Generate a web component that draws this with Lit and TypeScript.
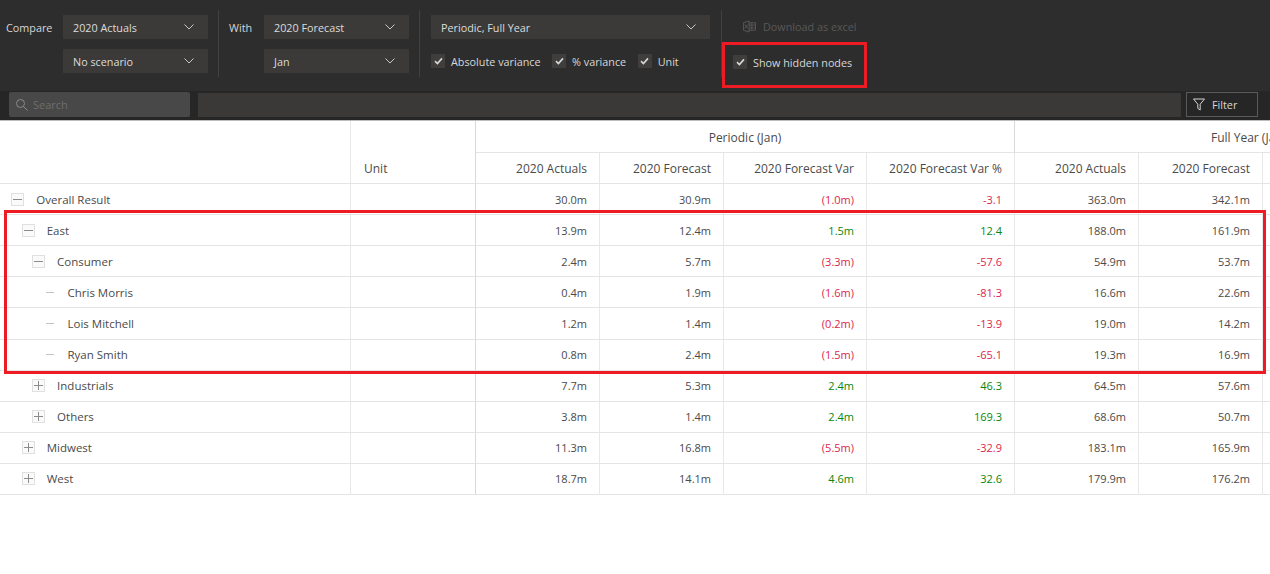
import { LitElement, html, css, svg } from 'lit';
import { customElement } from 'lit/decorators.js';

type Row = { label: string; level: number; kind: 'minus' | 'plus' | 'leaf'; vals: string[] };

const rows: Row[] = [
    { label: 'Overall Result', level: 0, kind: 'minus', vals: ['30.0m', '30.9m', '(1.0m)', '-3.1', '363.0m', '342.1m'] },
    { label: 'East', level: 1, kind: 'minus', vals: ['13.9m', '12.4m', '1.5m', '12.4', '188.0m', '161.9m'] },
    { label: 'Consumer', level: 2, kind: 'minus', vals: ['2.4m', '5.7m', '(3.3m)', '-57.6', '54.9m', '53.7m'] },
    { label: 'Chris Morris', level: 3, kind: 'leaf', vals: ['0.4m', '1.9m', '(1.6m)', '-81.3', '16.6m', '22.6m'] },
    { label: 'Lois Mitchell', level: 3, kind: 'leaf', vals: ['1.2m', '1.4m', '(0.2m)', '-13.9', '19.0m', '14.2m'] },
    { label: 'Ryan Smith', level: 3, kind: 'leaf', vals: ['0.8m', '2.4m', '(1.5m)', '-65.1', '19.3m', '16.9m'] },
    { label: 'Industrials', level: 2, kind: 'plus', vals: ['7.7m', '5.3m', '2.4m', '46.3', '64.5m', '57.6m'] },
    { label: 'Others', level: 2, kind: 'plus', vals: ['3.8m', '1.4m', '2.4m', '169.3', '68.6m', '50.7m'] },
    { label: 'Midwest', level: 1, kind: 'plus', vals: ['11.3m', '16.8m', '(5.5m)', '-32.9', '183.1m', '165.9m'] },
    { label: 'West', level: 1, kind: 'plus', vals: ['18.7m', '14.1m', '4.6m', '32.6', '179.9m', '176.2m'] },
];

const chevron = svg`<svg class="chev" width="10" height="6" viewBox="0 0 10 6"><path d="M.5.5L5 5 9.5.5" fill="none" stroke="#c8c8c8" stroke-width="1"/></svg>`;

@customElement('app-root')
export class AppRoot extends LitElement {
    static styles = css`
    :host {
        display: block;
        position: relative;
        width: 1270px;
        height: 574px;
        overflow: hidden;
        background: #fff;
        font-family: "Open Sans", "Noto Sans", sans-serif;
        font-size: 11px;
        color: #4a4a4a;
    }
    .toolbar {
        height: 91px;
        box-sizing: border-box;
        background: #2d2d2d;
        display: flex;
        padding-top: 10px;
        color: #d6d6d6;
        font-size: 10.8px;
    }
    .group {
        display: grid;
        grid-template-rows: 24px 24px;
        row-gap: 10px;
        padding-top: 5px;
        align-items: center;
        height: 67px;
        box-sizing: border-box;
        border-right: 1px solid #414141;
    }
    .g1 { width: 219px; grid-template-columns: 57px 145px; padding-left: 6px; }
    .g2 { width: 201px; grid-template-columns: 35px 145px; padding-left: 10px; }
    .g3 { width: 302px; grid-template-columns: 279px; padding-left: 11px; }
    .g4 { display: block; padding: 0; border: 0; }
    .select {
        grid-column: 2;
        height: 24px;
        background: #3b3a38;
        display: flex;
        align-items: center;
        justify-content: space-between;
        padding: 0 14px 0 10px;
        box-sizing: border-box;
        color: #dcdcdc;
    }
    .g3 .select { grid-column: 1; }
    .checks { display: flex; gap: 11.5px; }
    .check { display: flex; align-items: center; gap: 6px; color: #d8d8d8; }
    .box {
        width: 14px;
        height: 14px;
        background: #3f3e3c;
        display: flex;
        align-items: center;
        justify-content: center;
    }
    .download {
        display: flex;
        align-items: center;
        gap: 7px;
        height: 24px;
        margin: 4px 0 0 21px;
        color: #595959;
    }
    .hidden-nodes { display: flex; align-items: center; margin: 12px 0 0 11px; height: 24px; }
    .searchbar {
        height: 29px;
        box-sizing: border-box;
        background: #262626;
        display: flex;
        align-items: flex-start;
        padding: 1px 12px 0 9px;
        gap: 5px;
    }
    .search {
        width: 181px;
        height: 25px;
        margin-right: 3px;
        background: #484848;
        border-radius: 2px;
        display: flex;
        align-items: center;
        gap: 5px;
        padding-left: 6px;
        box-sizing: border-box;
        color: #6e6e6e;
        font-size: 11px;
    }
    .crumbs { flex: 1; height: 24px; background: #3a3937; margin-top: 1px; }
    .filter {
        width: 72px;
        height: 25px;
        box-sizing: border-box;
        border: 1px solid #5a5a5a;
        display: flex;
        align-items: center;
        gap: 7px;
        padding-left: 6px;
        color: #d6d6d6;
        font-size: 10.8px;
    }
    .table {
        border-top: 1px solid #bdbdbd;
        display: grid;
        grid-template-columns: 351px 125px 124px 124px 143px 148px 124px 124px 100px;
        grid-auto-rows: 31.05px;
        grid-template-rows: 31.65px 31.65px;
        width: 1363px;
    }
    .cell {
        box-sizing: border-box;
        display: flex;
        align-items: center;
        justify-content: flex-end;
        padding-right: 12px;
        border-right: 1px solid #e8e8e8;
        border-bottom: 1px solid #e4e4e4;
    }
    .hcell { font-size: 12px; color: #4a4a4a; padding-top: 1px; }
    .span { grid-column: span 4; justify-content: center; padding: 3px 0 0; }
    .span2 { grid-column: span 3; justify-content: flex-start; padding: 3px 0 0 196px; white-space: nowrap; }
    .unit { justify-content: flex-start; padding-left: 13px; }
    .noline { border-bottom: 0; }
    .label { justify-content: flex-start; padding-right: 0; font-size: 11.5px; }
    .strong { border-right-color: #d9d9d9; }
    .neg { color: #dc1f4f; }
    .pos { color: #0a860a; }
    .tree {
        width: 13px;
        height: 13px;
        margin-right: 12px;
        flex: none;
        display: block;
    }
    .mark {
        position: absolute;
        border: 3px solid #ed1c24;
        box-sizing: border-box;
        pointer-events: none;
    }
    .mark-a { left: 722px; top: 42px; width: 145px; height: 46px; }
    .mark-b { left: 4px; top: 210px; width: 1262px; height: 164px; }
    `;

    private treeIcon(kind: Row['kind']) {
        if (kind === 'leaf') {
            return svg`<svg class="tree" viewBox="0 0 13 13"><path d="M3 6.5h8" stroke="#c4c4c4"/></svg>`;
        }
        return svg`<svg class="tree" viewBox="0 0 13 13">
            <rect x="0.5" y="0.5" width="12" height="12" fill="#fafafa" stroke="#e0e0e0"/>
            <path d="${kind === 'plus' ? 'M2 6.5h9M6.5 2v9' : 'M2 6.5h9'}" stroke="#8c8c8c"/>
        </svg>`;
    }

    private check(label: string) {
        return html`<div class="check">
            <span class="box"><svg width="9" height="8" viewBox="0 0 9 8"><path d="M1 4.2l2.4 2.3L8 1.4" fill="none" stroke="#d8d8d8" stroke-width="1.6"/></svg></span>
            ${label}
        </div>`;
    }

    private valueClass(v: string, i: number) {
        if (i !== 2 && i !== 3) return '';
        return v.startsWith('(') || v.startsWith('-') ? 'neg' : 'pos';
    }

    render() {
        return html`
        <div class="toolbar">
            <div class="group g1">
                <span>Compare</span>
                <div class="select">2020 Actuals ${chevron}</div>
                <div class="select">No scenario ${chevron}</div>
            </div>
            <div class="group g2">
                <span>With</span>
                <div class="select">2020 Forecast ${chevron}</div>
                <div class="select">Jan ${chevron}</div>
            </div>
            <div class="group g3">
                <div class="select">Periodic, Full Year ${chevron}</div>
                <div class="checks">
                    ${this.check('Absolute variance')}
                    ${this.check('% variance')}
                    ${this.check('Unit')}
                </div>
            </div>
            <div class="group g4">
                <div class="download">
                    <svg width="13" height="13" viewBox="0 0 14 13" fill="none" stroke="#595959">
                        <path d="M.5 2.5l6-2v12l-6-2zM6.5 2.5h7v8h-7M9.5 2.5v8M6.5 5h7M6.5 8h7M2 4.5l3 4M5 4.5l-3 4"/>
                    </svg>
                    Download as excel
                </div>
                <div class="hidden-nodes">${this.check('Show hidden nodes')}</div>
            </div>
        </div>
        <div class="searchbar">
            <div class="search">
                <svg width="13" height="13" viewBox="0 0 13 13" fill="none" stroke="#8a8a8a"><circle cx="5.5" cy="5.5" r="4"/><path d="M8.5 8.5l4 4"/></svg>
                Search
            </div>
            <div class="crumbs"></div>
            <div class="filter">
                <svg width="12" height="13" viewBox="0 0 12 13" fill="none" stroke="#d6d6d6"><path d="M.5 1h11L7.2 6.2v5.8L4.8 10.4V6.2z"/></svg>
                Filter
            </div>
        </div>
        <div class="table">
            <div class="cell noline"></div>
            <div class="cell strong noline"></div>
            <div class="cell hcell span strong">Periodic (Jan)</div>
            <div class="cell hcell span2">Full Year (Jan)</div>

            <div class="cell"></div>
            <div class="cell hcell unit strong">Unit</div>
            ${['2020 Actuals', '2020 Forecast', '2020 Forecast Var', '2020 Forecast Var %', '2020 Actuals', '2020 Forecast', '']
                .map((h) => html`<div class="cell hcell">${h}</div>`)}

            ${rows.map((r) => html`
                <div class="cell label" style="padding-left:${11.3 + r.level * 10.4}px">
                    ${this.treeIcon(r.kind)}${r.label}
                </div>
                <div class="cell strong"></div>
                ${r.vals.map((v, i) => html`<div class="cell ${this.valueClass(v, i)}">${v}</div>`)}
                <div class="cell"></div>
            `)}
        </div>
        <div class="mark mark-a"></div>
        <div class="mark mark-b"></div>
        `;
    }
}
